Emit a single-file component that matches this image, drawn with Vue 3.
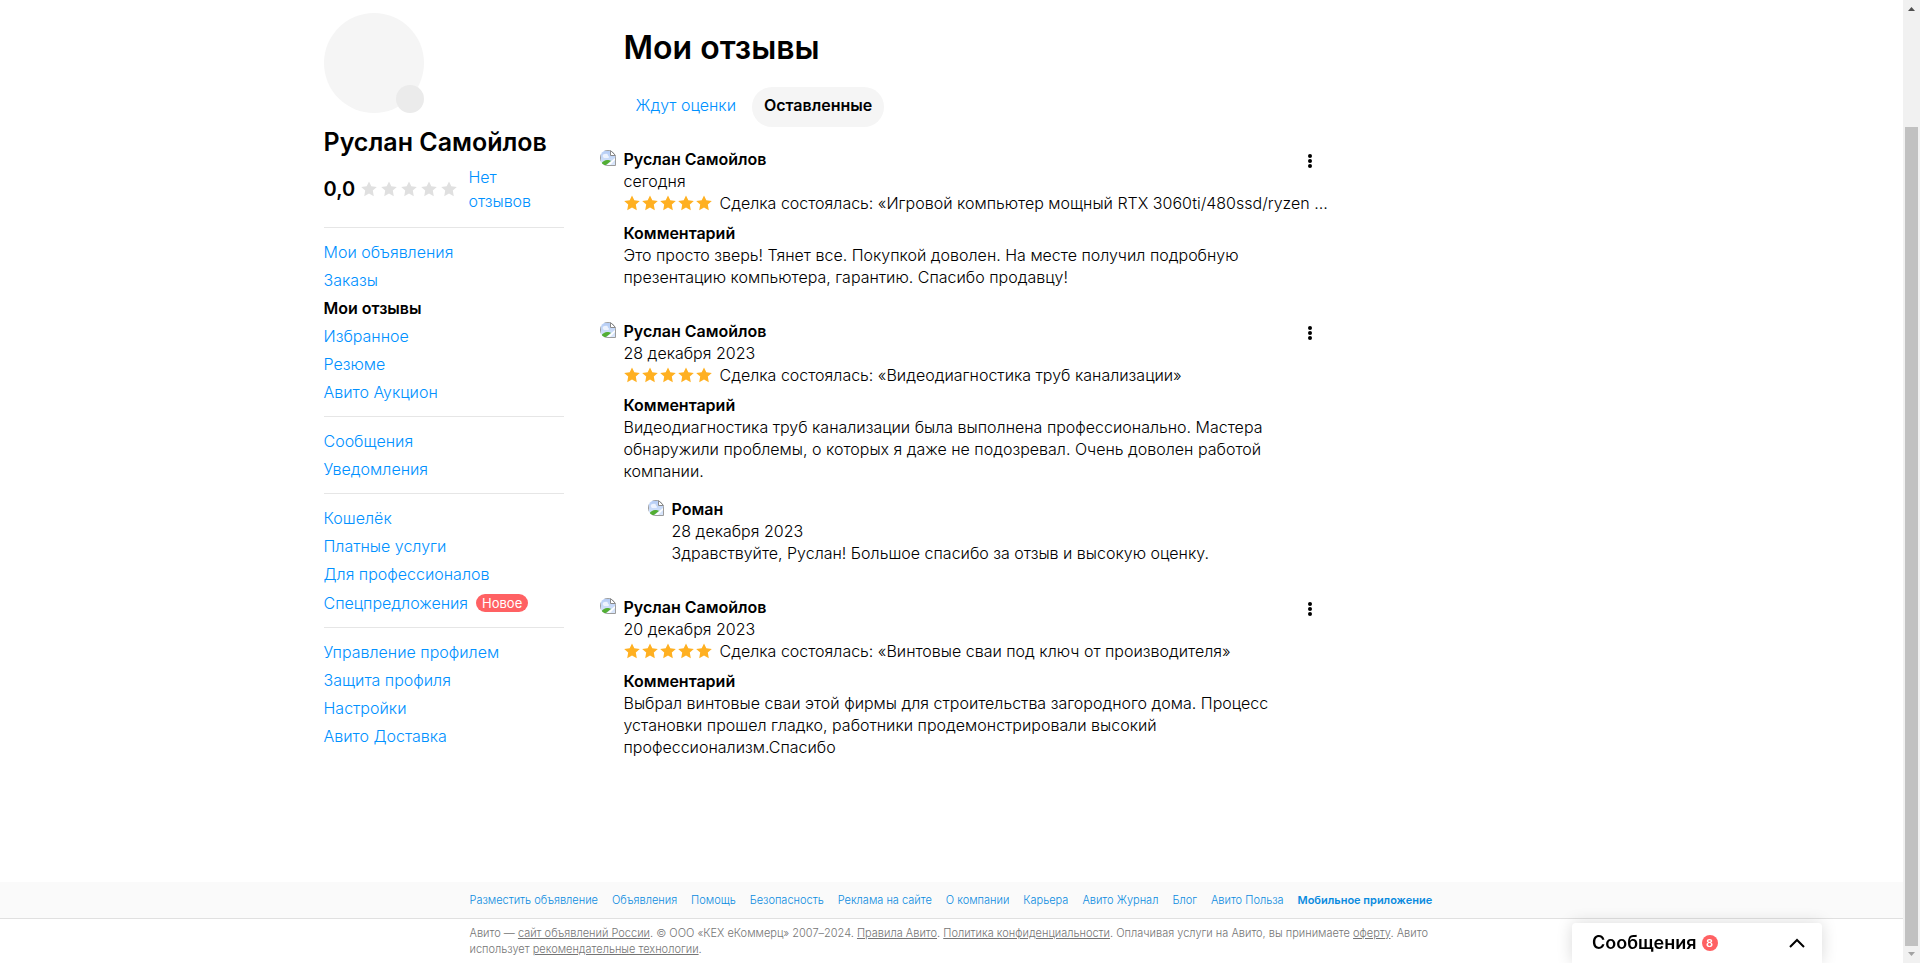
<script setup>
const groups = [
  ['Мои объявления', 'Заказы', 'Мои отзывы', 'Избранное', 'Резюме', 'Авито Аукцион'],
  ['Сообщения', 'Уведомления'],
  ['Кошелёк', 'Платные услуги', 'Для профессионалов', 'Спецпредложения'],
  ['Управление профилем', 'Защита профиля', 'Настройки', 'Авито Доставка'],
]
const reviews = [
  {
    name: 'Руслан Самойлов',
    date: 'сегодня',
    item: 'Сделка состоялась: «Игровой компьютер мощный RTX 3060ti/480ssd/ryzen …',
    text: 'Это просто зверь! Тянет все. Покупкой доволен. На месте получил подробную\nпрезентацию компьютера, гарантию. Спасибо продавцу!',
  },
  {
    name: 'Руслан Самойлов',
    date: '28 декабря 2023',
    item: 'Сделка состоялась: «Видеодиагностика труб канализации»',
    text: 'Видеодиагностика труб канализации была выполнена профессионально. Мастера\nобнаружили проблемы, о которых я даже не подозревал. Очень доволен работой\nкомпании.',
    reply: {
      name: 'Роман',
      date: '28 декабря 2023',
      text: 'Здравствуйте, Руслан! Большое спасибо за отзыв и высокую оценку.',
    },
  },
  {
    name: 'Руслан Самойлов',
    date: '20 декабря 2023',
    item: 'Сделка состоялась: «Винтовые сваи под ключ от производителя»',
    text: 'Выбрал винтовые сваи этой фирмы для строительства загородного дома. Процесс\nустановки прошел гладко, работники продемонстрировали высокий\nпрофессионализм.Спасибо',
  },
]
const footerLinks = [
  'Разместить объявление', 'Объявления', 'Помощь', 'Безопасность', 'Реклама на сайте',
  'О компании', 'Карьера', 'Авито Журнал', 'Блог', 'Авито Польза', 'Мобильное приложение',
]
const star = 'M8 .4l2.300 4.800 5.500.7-4 3.700 1 5.600L8 12.500 3.200 15.200l1-5.600-4-3.700 5.500-.7z'
</script>

<template>
  <div class="page">
    <svg class="defs" width="0" height="0" aria-hidden="true">
      <defs>
        <linearGradient id="sky" x1="0" y1="0" x2="0" y2="1">
          <stop offset="0" stop-color="#b4ccf5" />
          <stop offset="1" stop-color="#dce8fb" />
        </linearGradient>
      </defs>
      <symbol id="broken" viewBox="0 0 16 16">
        <path d="M.5.5H11L15.500 5v10.500H.5z" fill="url(#sky)" stroke="#9c9c9c" />
        <path d="M3 7a2 2 0 0 1 2-3 2 2 0 0 1 3 2 1 1 0 0 1 0 2H4z" fill="#edf3fe" />
        <path d="M1 15v-1c2-3 4-4 6-4 2 0 3 0 4 1l-5 4z" fill="#53ae34" />
        <path d="M10.500.5v5h5z" fill="#fff" stroke="#8a8a8a" />
        <path d="M15 8v2l-5 5H7z" fill="#fff" />
      </symbol>
    </svg>

    <div class="layout">
      <aside class="side">
        <div class="avatar"><span class="avatar-add"></span></div>
        <h2 class="user">Руслан Самойлов</h2>
        <div class="rating">
          <span class="score">0,0</span>
          <span class="stars empty">
            <svg v-for="n in 5" :key="n" viewBox="0 0 16 16"><path :d="star" /></svg>
          </span>
          <a href="#" class="no-reviews">Нет отзывов</a>
        </div>
        <nav>
          <ul v-for="(group, i) in groups" :key="i" class="group">
            <li v-for="label in group" :key="label" :class="{ tagged: label === 'Спецпредложения' }">
              <strong v-if="label === 'Мои отзывы'">{{ label }}</strong>
              <a v-else href="#">{{ label }}</a>
              <span v-if="label === 'Спецпредложения'" class="tag">Новое</span>
            </li>
          </ul>
        </nav>
      </aside>

      <main class="main">
        <h1>Мои отзывы</h1>
        <div class="tabs">
          <button type="button">Ждут оценки</button>
          <button type="button" class="active">Оставленные</button>
        </div>
        <article v-for="(r, i) in reviews" :key="i" class="review">
          <svg class="pic" role="img" aria-label="Аватар"><use href="#broken" /></svg>
          <div class="body">
            <div class="name">{{ r.name }}</div>
            <div>{{ r.date }}</div>
            <div class="deal">
              <span class="stars">
                <svg v-for="n in 5" :key="n" viewBox="0 0 16 16"><path :d="star" /></svg>
              </span>
              <span class="deal-text">{{ r.item }}</span>
            </div>
            <div class="name comment">Комментарий</div>
            <p>{{ r.text }}</p>
            <div v-if="r.reply" class="reply">
              <svg class="pic" role="img" aria-label="Аватар"><use href="#broken" /></svg>
              <div class="body">
                <div class="name">{{ r.reply.name }}</div>
                <div>{{ r.reply.date }}</div>
                <p>{{ r.reply.text }}</p>
              </div>
            </div>
          </div>
          <button type="button" class="more" aria-label="Ещё">
            <svg viewBox="0 0 4 14" width="4" height="14">
              <circle cx="2" cy="2" r="2" /><circle cx="2" cy="7" r="2" /><circle cx="2" cy="12" r="2" />
            </svg>
          </button>
        </article>
      </main>
    </div>

    <footer class="footer">
      <nav class="footer-bar">
        <div class="footer-inner links">
          <a v-for="l in footerLinks" :key="l" href="#">{{ l }}</a>
        </div>
      </nav>
      <p class="footer-inner legal">
        Авито — <a href="#">сайт объявлений России</a>. © ООО «КЕХ еКоммерц» 2007–2024.
        <a href="#">Правила Авито</a>. <a href="#">Политика конфиденциальности</a>.
        Оплачивая услуги на Авито, вы принимаете <a href="#">оферту</a>. Авито<br>
        использует <a href="#">рекомендательные технологии</a>.
      </p>
    </footer>

    <button type="button" class="messenger">
      <span>Сообщения</span>
      <span class="count">8</span>
      <svg class="chevron" viewBox="0 0 16 10" width="16" height="10">
        <path d="M1 9l7-7 7 7" fill="none" stroke="#000" stroke-width="2" />
      </svg>
    </button>

    <div class="scrollbar" aria-hidden="true">
      <svg viewBox="0 0 17 17"><path d="M5 11h7L8.500 7z" fill="#505050" /></svg>
      <div class="track"><div class="thumb"></div></div>
      <svg viewBox="0 0 17 17"><path d="M5 6h7l-3.500 4z" fill="#a3a3a3" /></svg>
    </div>
  </div>
</template>

<style>
body {
  background: #fff;
}
</style>

<style scoped>
.page {
  display: flex;
  flex-direction: column;
  min-height: 100vh;
  padding-right: 17px;
  box-sizing: border-box;
  font: 300 16px/22px Inter, "Noto Sans", sans-serif;
  color: #000;
}
.defs {
  position: absolute;
}
a {
  color: #0091ff;
  text-decoration: none;
}
button {
  font: inherit;
  border: 0;
  background: none;
  padding: 0;
  cursor: pointer;
}
h1, h2, p, ul {
  margin: 0;
  padding: 0;
}
.layout {
  display: flex;
  gap: 36px;
  width: 100%;
  max-width: 1256px;
  margin: 0 auto;
}
.side {
  width: 240px;
  flex: none;
  padding-top: 13px;
}
.avatar {
  position: relative;
  width: 100px;
  height: 100px;
  border-radius: 50%;
  background: #f5f5f5;
}
.avatar-add {
  position: absolute;
  right: 0;
  bottom: 0;
  width: 28px;
  height: 28px;
  border-radius: 50%;
  background: #ebebeb;
}
.user {
  margin-top: 14px;
  font-size: 25px;
  line-height: 30px;
  font-weight: 600;
  white-space: nowrap;
}
.rating {
  display: flex;
  align-items: center;
  margin: 8px 0 14px;
  line-height: 24px;
}
.score {
  font-size: 20px;
  font-weight: 600;
  width: 38px;
}
.stars {
  display: flex;
  flex: none;
  gap: 2px;
}
.stars svg {
  width: 16px;
  height: 16px;
  fill: #ffb021;
}
.stars.empty {
  gap: 4px;
}
.stars.empty svg {
  fill: #e0e0e0;
}
.no-reviews {
  margin-left: 11px;
}
.group {
  list-style: none;
  padding: 10px 0;
  border-top: 1px solid #e6e6e6;
}
.group li {
  display: flex;
  align-items: center;
  min-height: 28px;
}
.group .tagged {
  min-height: 29px;
}
.group strong,
.name {
  font-weight: 600;
}
.tag {
  margin-left: 8px;
  padding: 0 6px;
  border-radius: 9px;
  background: #ff6163;
  color: #fff;
  font-size: 13px;
  line-height: 18px;
  font-weight: 400;
}
.main {
  flex: 1;
  max-width: 720px;
  padding-top: 28px;
}
h1 {
  margin-left: 24px;
  font-size: 32px;
  line-height: 40px;
  font-weight: 600;
}
.tabs {
  display: flex;
  gap: 4px;
  margin: 19px 0 21px 24px;
}
.tabs button {
  height: 40px;
  padding: 0 12px 4px;
  border-radius: 20px;
  color: #0091ff;
}
.tabs .active {
  background: #f5f5f5;
  color: #000;
  font-weight: 600;
}
.review {
  position: relative;
  display: flex;
  gap: 8px;
  margin-bottom: 32px;
}
.pic {
  flex: none;
  width: 16px;
  height: 16px;
  margin-top: 2px;
  border-radius: 8px 8px 0 8px;
}
.body {
  flex: 1;
  min-width: 0;
}
.deal {
  display: flex;
  align-items: center;
}
.deal-text {
  margin-left: 8px;
  white-space: nowrap;
}
.comment {
  margin-top: 8px;
}
.body p {
  white-space: pre-line;
}
.reply {
  display: flex;
  gap: 8px;
  margin: 16px 0 0 24px;
}
.more {
  position: absolute;
  top: 4px;
  right: 6px;
  width: 8px;
  height: 18px;
  line-height: 0;
}
.footer {
  margin-top: auto;
  margin-right: -17px;
  padding-right: 17px;
  font-size: 11px;
  line-height: 16px;
}
.footer-bar {
  margin-right: -17px;
  padding: 10px 17px 10px 0;
  background: #fafafa;
  border-bottom: 1px solid #e0e0e0;
}
.footer-inner {
  max-width: 964px;
  margin: 0 auto;
}
.links {
  display: flex;
  gap: 14px;
  white-space: nowrap;
}
.links a {
  color: #0a8bdf;
}
.links a:last-child {
  font-weight: 600;
}
.legal {
  padding: 6px 0 6px;
  color: #757575;
  white-space: nowrap;
}
.legal a {
  color: inherit;
  text-decoration: underline;
}
.messenger {
  position: fixed;
  right: 98px;
  bottom: 0;
  display: flex;
  align-items: center;
  width: 250px;
  height: 40px;
  padding: 0 17px 0 20px;
  border-radius: 4px 4px 0 0;
  background: #fff;
  box-shadow: 0 0 16px rgba(0, 0, 0, 0.15);
  font-size: 18px;
  font-weight: 600;
}
.count {
  width: 16px;
  height: 16px;
  margin-left: 5px;
  border-radius: 50%;
  background: #ff6163;
  color: #fff;
  font-size: 11px;
  line-height: 16px;
}
.chevron {
  margin-left: auto;
}
.scrollbar {
  position: fixed;
  top: 0;
  right: 0;
  bottom: 0;
  display: flex;
  flex-direction: column;
  width: 17px;
  background: #f1f1f1;
}
.scrollbar svg {
  width: 17px;
  height: 17px;
}
.track {
  display: flex;
  flex: 1;
  justify-content: center;
  padding-top: 110px;
}
.thumb {
  width: 13px;
  background: #c1c1c1;
}
</style>
